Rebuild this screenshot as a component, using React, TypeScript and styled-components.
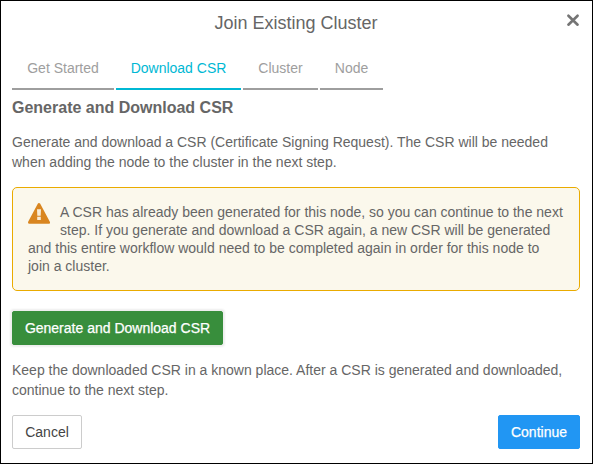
import React from "react";
import styled, { createGlobalStyle } from "styled-components";

const GlobalStyle = createGlobalStyle`
  *, *::before, *::after { box-sizing: border-box; }
  body { margin: 0; background: #fff; }
`;

const Dialog = styled.main`
  width: 593px;
  height: 464px;
  padding: 0 12px 0 11px;
  border: 1px solid #000;
  background: #fff;
  color: #666;
  font: 14px/20px "Liberation Sans", Arial, sans-serif;
  overflow: hidden;
`;

const Header = styled.header`
  display: grid;
  grid-template-columns: 14px 1fr 14px;
  height: 45px;
  padding-top: 10px;
`;

const Title = styled.h1`
  grid-column: 2;
  margin: 0;
  font-size: 18px;
  font-weight: 400;
  line-height: 24px;
  text-align: center;
`;

const CloseButton = styled.button`
  align-self: start;
  width: 14px;
  height: 14px;
  margin-top: 2px;
  padding: 0;
  border: 0;
  background: none;
  color: #757575;
  svg { display: block; }
`;

const Tabs = styled.nav`
  display: flex;
  gap: 2px;
  height: 44px;
`;

const Tab = styled.button<{ $active?: boolean; $width: number }>`
  width: ${(p) => p.$width}px;
  padding: 1px 0 0;
  border: 0;
  border-bottom: 2px solid ${(p) => (p.$active ? "#00b8d4" : "#9e9e9e")};
  background: none;
  color: ${(p) => (p.$active ? "#00b8d4" : "#9e9e9e")};
  font: inherit;
  white-space: nowrap;
`;

const SectionTitle = styled.h2`
  margin: 8px 0 14px;
  font-size: 16px;
  line-height: 20px;
`;

const Paragraph = styled.p`
  margin: 0;
  white-space: pre-line;
`;

const Alert = styled.section`
  height: 104px;
  margin: 15px 0 20px;
  padding: 15px;
  border: 1px solid #eaab00;
  border-radius: 5px;
  background: #fbf8ec;
  line-height: 18px;
  white-space: pre-line;
`;

const WarningIcon = styled.svg`
  float: left;
  width: 22px;
  height: 21px;
  margin: 0 10px 0 0;
`;

const Button = styled.button<{ $kind: "success" | "primary" | "plain"; $width: number }>`
  width: ${(p) => p.$width}px;
  height: 34px;
  padding: 0;
  border: 1px solid ${(p) => ({ success: "#388e3c", primary: "#2196f3", plain: "#ccc" })[p.$kind]};
  border-radius: 2px;
  background: ${(p) => ({ success: "#388e3c", primary: "#2196f3", plain: "#fff" })[p.$kind]};
  box-shadow: ${(p) => (p.$kind === "success" ? "0 0 2px 2px #eee" : "none")};
  color: ${(p) => (p.$kind === "plain" ? "#444" : "#fff")};
  font: inherit;
  -webkit-text-stroke: ${(p) => (p.$kind === "plain" ? "0" : "0.25px #fff")};
  display: block;
`;

const Note = styled(Paragraph)`
  margin: 15px 0;
`;

const Footer = styled.footer`
  display: flex;
  justify-content: space-between;
`;

export default function App() {
  return (
    <>
      <GlobalStyle />
      <Dialog>
        <Header>
          <Title>Join Existing Cluster</Title>
          <CloseButton aria-label="Close">
            <svg width="14" height="14" viewBox="0 0 14 14" stroke="currentColor" strokeWidth="2.6" strokeLinecap="round">
              <path d="M2.4 2.7 11.6 11.7M11.6 2.7 2.4 11.7" />
            </svg>
          </CloseButton>
        </Header>
        <Tabs>
          <Tab $width={102}>Get Started</Tab>
          <Tab $width={125} $active>Download CSR</Tab>
          <Tab $width={75}>Cluster</Tab>
          <Tab $width={63}>Node</Tab>
        </Tabs>
        <SectionTitle>Generate and Download CSR</SectionTitle>
        <Paragraph>
          {"Generate and download a CSR (Certificate Signing Request). The CSR will be needed\nwhen adding the node to the cluster in the next step."}
        </Paragraph>
        <Alert>
          <WarningIcon viewBox="0 0 22 21" aria-hidden="true">
            <path d="M11 1.5 20.6 19.4H1.4Z" fill="#d98620" stroke="#d98620" strokeWidth="2.8" strokeLinejoin="round" />
            <path d="M9 6.3h4l-.3 6.5H9.3ZM9.2 13.7h3.6v3.2H9.2Z" fill="#f8ecd6" />
          </WarningIcon>
          {"A CSR has already been generated for this node, so you can continue to the next\nstep. If you generate and download a CSR again, a new CSR will be generated\nand this entire workflow would need to be completed again in order for this node to\njoin a cluster."}
        </Alert>
        <Button $kind="success" $width={211}>Generate and Download CSR</Button>
        <Note>
          {"Keep the downloaded CSR in a known place. After a CSR is generated and downloaded,\ncontinue to the next step."}
        </Note>
        <Footer>
          <Button $kind="plain" $width={70}>Cancel</Button>
          <Button $kind="primary" $width={82}>Continue</Button>
        </Footer>
      </Dialog>
    </>
  );
}
